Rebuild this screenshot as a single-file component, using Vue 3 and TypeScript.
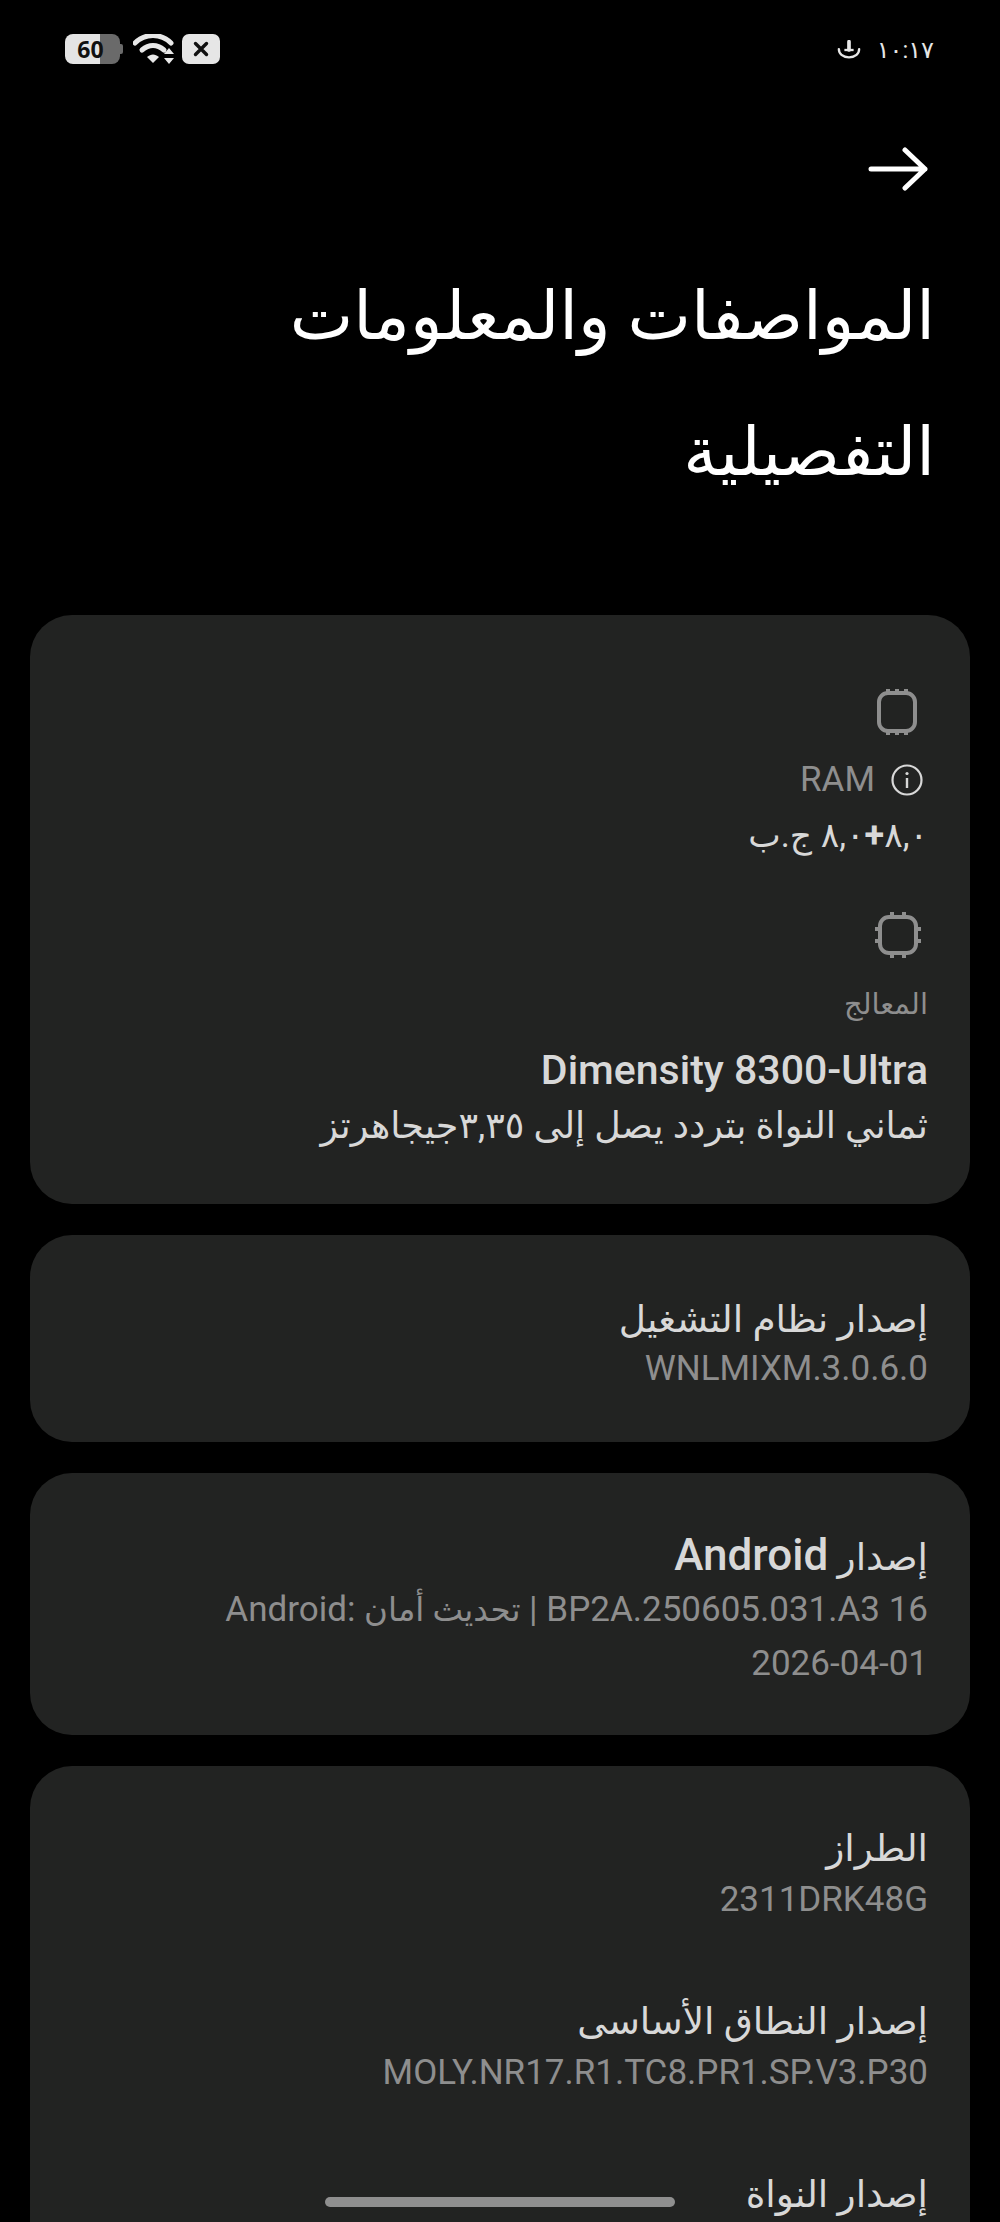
<template>
  <div class="screen" dir="rtl">
    <header class="status-bar" dir="ltr">
      <div class="status-left">
        <div class="battery"><span>60</span></div>
        <svg class="wifi" width="42" height="30" viewBox="0 0 42 30">
          <path d="M2 9C12-1 28-1 38 9" fill="none" stroke="#e8e8e8" stroke-width="5" stroke-linecap="round" />
          <path d="M9 16c7-6 15-6 22 0" fill="none" stroke="#e8e8e8" stroke-width="5" stroke-linecap="round" />
          <path d="M14 23c4-3.500 8-3.500 12 0l-6 6z" fill="#e8e8e8" />
          <path d="M36 14l5 6H31zM36 30l5-6H31z" fill="#e8e8e8" />
        </svg>
        <div class="x-badge">
          <svg width="16" height="16" viewBox="0 0 16 16">
            <path d="M2.500 2.500l11 11M13.500 2.500l-11 11" stroke="#111" stroke-width="3.400" stroke-linecap="round" />
          </svg>
        </div>
      </div>
      <div class="status-right">
        <svg width="24" height="20" viewBox="0 0 26 20">
          <path d="M13 1v9" stroke="#e8e8e8" stroke-width="4" stroke-linecap="round" />
          <path d="M8 10h10" stroke="#e8e8e8" stroke-width="2.500" />
          <path d="M2 9c0 5 4 9 11 9s11-4 11-9" fill="none" stroke="#e8e8e8" stroke-width="2.500" stroke-linecap="round" />
        </svg>
        <span class="clock">١٠:١٧</span>
      </div>
    </header>

    <div class="back-row">
      <svg width="62" height="44" viewBox="0 0 62 44">
        <path d="M4 22H58M38 3l20 19-20 19" fill="none" stroke="#fff" stroke-width="5" stroke-linecap="round" stroke-linejoin="round" />
      </svg>
    </div>

    <h1 class="title">المواصفات والمعلومات التفصيلية</h1>

    <section class="card card-specs">
      <svg class="chip" width="42" height="48" viewBox="0 0 42 48">
        <rect x="3" y="5" width="36" height="38" rx="9" fill="none" stroke="#8e8e8e" stroke-width="4" />
        <path d="M12 1v4M21 1v4M30 1v4M12 43v4M21 43v4M30 43v4" stroke="#8e8e8e" stroke-width="4" />
      </svg>
      <div class="label-row">
        <svg class="info" width="32" height="32" viewBox="0 0 32 32">
          <circle cx="16" cy="16" r="14.500" fill="none" stroke="#d8d8d8" stroke-width="2.200" />
          <path d="M16 14v10" stroke="#d8d8d8" stroke-width="2.400" />
          <circle cx="16" cy="9.500" r="1.600" fill="#d8d8d8" />
        </svg>
        <span class="label">RAM</span>
      </div>
      <div class="primary ram">٨,٠<b class="plus">+</b>٨,٠ ج.ب</div>

      <svg class="chip chip-cpu" width="48" height="48" viewBox="0 0 48 48">
        <rect x="6" y="6" width="36" height="36" rx="9" fill="none" stroke="#8e8e8e" stroke-width="4" />
        <path d="M18 1v5M30 1v5M18 42v5M30 42v5M1 18h5M1 30h5M42 18h5M42 30h5" stroke="#8e8e8e" stroke-width="4" />
      </svg>
      <div class="label label-cpu">المعالج</div>
      <div class="cpu-name">Dimensity 8300-Ultra</div>
      <div class="primary cpu-desc">ثماني النواة بتردد يصل إلى ٣,٣٥جيجاهرتز</div>
    </section>

    <section class="card card-info">
      <div class="primary">إصدار نظام التشغيل</div>
      <div class="secondary">WNLMIXM.3.0.6.0</div>
    </section>

    <section class="card card-android">
      <div class="primary">إصدار <b>Android</b></div>
      <div class="secondary build">16 BP2A.250605.031.A3 | <span class="ar-small">تحديث أمان</span> :Android</div>
      <div class="secondary date">2026-04-01</div>
    </section>

    <section class="card card-list">
      <div v-for="row in rows" :key="row.name" class="list-row">
        <div class="primary">{{ row.name }}</div>
        <div v-if="row.value" class="secondary list-value">{{ row.value }}</div>
      </div>
    </section>

    <div class="home-pill"></div>
  </div>
</template>

<script setup lang="ts">
const rows: { name: string; value?: string }[] = [
  { name: 'الطراز', value: '2311DRK48G' },
  { name: 'إصدار النطاق الأساسى', value: 'MOLY.NR17.R1.TC8.PR1.SP.V3.P30' },
  { name: 'إصدار النواة' },
];
</script>

<style>
html,
body {
  margin: 0;
  background: #000;
}
</style>

<style scoped>
.screen {
  position: relative;
  width: 1000px;
  height: 2222px;
  overflow: hidden;
  background: #000;
  font-family: Roboto, "Noto Sans", "DejaVu Sans", sans-serif;
  color: #e2e2e2;
}

.status-bar {
  display: flex;
  justify-content: space-between;
  align-items: center;
  height: 30px;
  padding: 34px 66px 0 65px;
}

.status-left {
  display: flex;
  align-items: center;
}

.battery {
  position: relative;
  display: flex;
  align-items: center;
  justify-content: center;
  box-sizing: border-box;
  width: 55px;
  height: 30px;
  padding-right: 4px;
  border-radius: 8px;
  background: linear-gradient(90deg, #e4e4e4 63%, #6a6a6a 63%);
  font: 700 23px "Noto Sans", sans-serif;
  color: #111;
}

.battery::after {
  content: "";
  position: absolute;
  right: -3px;
  top: 10px;
  width: 3px;
  height: 10px;
  border-radius: 0 2px 2px 0;
  background: #6a6a6a;
}

.wifi {
  margin: 0 7px 0 13px;
}

.x-badge {
  display: flex;
  align-items: center;
  justify-content: center;
  width: 38px;
  height: 30px;
  border-radius: 7px;
  background: #e6e6e6;
}

.status-right {
  display: flex;
  align-items: center;
  gap: 16px;
  margin-top: 2px;
}

.clock {
  font-size: 24px;
  color: #e6e6e6;
}

.back-row {
  display: flex;
  padding: 83px 71px 0 0;
  justify-content: flex-start;
}

.title {
  margin: 57px 65px 0 0;
  width: 720px;
  font-size: 67.5px;
  font-weight: 400;
  line-height: 136px;
  color: #fff;
}

.card {
  display: flex;
  flex-direction: column;
  align-items: flex-start;
  margin: 0 30px 31px;
  padding: 0 42px;
  border-radius: 42px;
  background: #222322;
}

.card-specs {
  margin-top: 95px;
  padding-top: 73px;
  height: 589px;
  box-sizing: border-box;
}

.chip {
  margin-right: 10px;
}

.label-row {
  display: flex;
  align-items: center;
  gap: 16px;
  margin-top: 23px;
}

.info {
  margin-right: 5px;
}

.label {
  font-size: 35px;
  color: #8e8e8e;
}

.primary {
  font-size: 37.500px;
  line-height: 52px;
  color: #d8d8d8;
}

.primary b {
  font-weight: 500;
  font-size: 44px;
}

.ram {
  margin-top: 9px;
  font-size: 34.500px;
}

.primary b.plus {
  font-family: Roboto, sans-serif;
  font-weight: 700;
  font-size: 36px;
}

.chip-cpu {
  margin-top: 50px;
  margin-right: 6px;
}

.label-cpu {
  margin-top: 28px;
  font-size: 29px;
}

.cpu-name {
  margin-top: 25px;
  font-size: 41px;
  font-weight: 500;
  color: #d8d8d8;
}

.cpu-desc {
  margin-top: 6px;
  font-size: 36.500px;
}

.secondary {
  font-size: 35px;
  line-height: 48px;
  color: #8e8e8e;
}

.ar-small {
  font-size: 32.500px;
}

.build {
  margin-top: 3px;
}

.date {
  margin-top: 6px;
}

.card-info {
  height: 207px;
  box-sizing: border-box;
  padding-top: 58px;
}

.card-android {
  height: 262px;
  box-sizing: border-box;
  padding-top: 56px;
}

.card-list {
  padding-top: 56px;
  padding-bottom: 120px;
  gap: 71px;
}

.list-value {
  margin-top: 2px;
}

.home-pill {
  position: absolute;
  left: 325px;
  bottom: 15px;
  width: 350px;
  height: 10px;
  border-radius: 5px;
  background: #8f8f8f;
}
</style>
